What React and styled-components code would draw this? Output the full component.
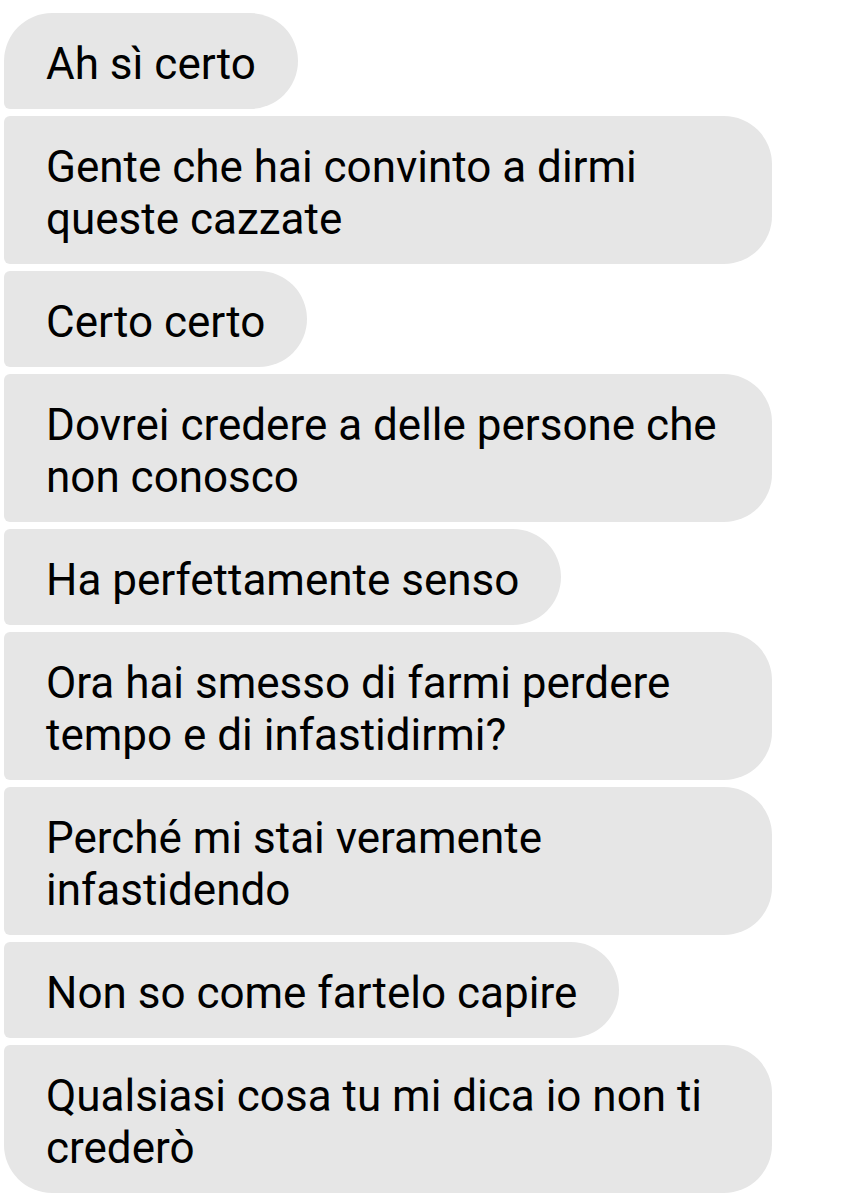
import React from "react";
import styled, { createGlobalStyle } from "styled-components";

const Global = createGlobalStyle`
  html, body { margin: 0; padding: 0; background: #ffffff; }
  body { font-family: Roboto, "Noto Sans", sans-serif; }
`;

const Thread = styled.div`
  display: flex;
  flex-direction: column;
  align-items: flex-start;
  gap: 7px;
  padding: 13px 0 0 4px;
`;

const Bubble = styled.div`
  box-sizing: border-box;
  max-width: 768px;
  padding: 25px 42px 19px;
  background: #e6e6e6;
  color: #000000;
  font-size: 44px;
  line-height: 52px;
  border-radius: ${(p) => (p.$first ? "48px" : "6px")} 48px 48px
    ${(p) => (p.$last ? "48px" : "6px")};
`;

const messages = [
  "Ah sì certo",
  "Gente che hai convinto a dirmi queste cazzate",
  "Certo certo",
  "Dovrei credere a delle persone che non conosco",
  "Ha perfettamente senso",
  "Ora hai smesso di farmi perdere tempo e di infastidirmi?",
  "Perché mi stai veramente infastidendo",
  "Non so come fartelo capire",
  "Qualsiasi cosa tu mi dica io non ti crederò",
];

export default function App() {
  return (
    <>
      <Global />
      <Thread>
        {messages.map((m, i) => (
          <Bubble key={i} $first={i === 0} $last={i === messages.length - 1}>
            {m}
          </Bubble>
        ))}
      </Thread>
    </>
  );
}
